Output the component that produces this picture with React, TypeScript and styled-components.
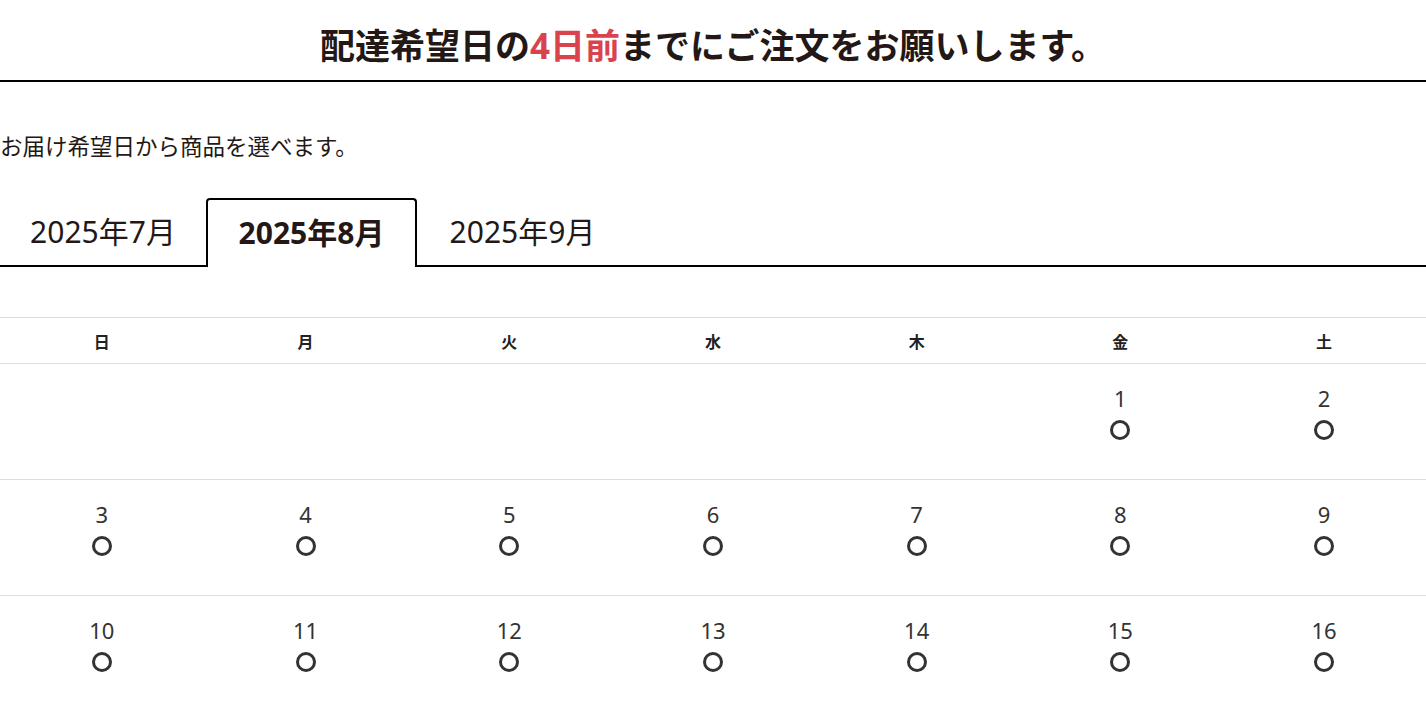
import styled, { createGlobalStyle } from "styled-components";
import { useState } from "react";

const GlobalStyle = createGlobalStyle`
	body {
		margin: 0;
		background: #fff;
		color: #222;
		font-family: "Noto Sans", "Noto Sans CJK JP", sans-serif;
	}
`;

const months = ["2025年7月", "2025年8月", "2025年9月"];
const weekdays = ["日", "月", "火", "水", "木", "金", "土"];

// August 2025 starts on a Friday
const buildWeeks = () => {
	const cells: (number | null)[] = [null, null, null, null, null];
	for (let d = 1; d <= 31; d++) cells.push(d);
	const weeks: (number | null)[][] = [];
	for (let i = 0; i < cells.length; i += 7) weeks.push(cells.slice(i, i + 7));
	return weeks;
};

const App = () => {
	const [active, setActive] = useState<number>(1);
	const weeks = buildWeeks();

	return (
		<Page>
			<GlobalStyle />
			<Heading>
				配達希望日の<Accent>4日前</Accent>までにご注文をお願いします。
			</Heading>
			<Lead>お届け希望日から商品を選べます。</Lead>
			<Tabs>
				{months.map((m, i) => (
					<Tab key={m} $active={i === active} onClick={() => setActive(i)}>
						{m}
					</Tab>
				))}
			</Tabs>
			<Calendar>
				<thead>
					<tr>
						{weekdays.map((w) => (
							<HeadCell key={w}>{w}</HeadCell>
						))}
					</tr>
				</thead>
				<tbody>
					{weeks.map((week, wi) => (
						<tr key={wi}>
							{week.map((day, di) => (
								<DayCell key={di}>
									{day && (
										<>
											<DayNumber>{day}</DayNumber>
											<Mark />
										</>
									)}
								</DayCell>
							))}
						</tr>
					))}
				</tbody>
			</Calendar>
		</Page>
	);
};

export default App;

const Page = styled.div`
	width: 100%;
	height: 707px;
	overflow: hidden;
`;

const Heading = styled.h1`
	margin: 0;
	padding: 22px 0 11px;
	font-size: 35px;
	font-weight: 700;
	line-height: 1.35;
	text-align: center;
	color: #231815;
	border-bottom: 2px solid #000;
`;

const Accent = styled.span`
	color: #d9434d;
`;

const Lead = styled.p`
	margin: 50px 0 0;
	font-size: 22.5px;
	line-height: 30px;
	color: #231815;
`;

const Tabs = styled.div`
	display: flex;
	margin-top: 36px;
	border-bottom: 2px solid #000;
	height: 69px;
	box-sizing: border-box;
`;

const Tab = styled.div<{ $active: boolean }>`
	width: 211px;
	box-sizing: border-box;
	display: flex;
	align-items: center;
	justify-content: center;
	padding-bottom: 6px;
	font-size: 30px;
	color: #231815;
	cursor: pointer;
	font-weight: ${(p) => (p.$active ? 700 : 400)};
	border: 2px solid ${(p) => (p.$active ? "#000" : "transparent")};
	border-bottom: none;
	border-radius: 4px 4px 0 0;
	margin-bottom: ${(p) => (p.$active ? "-2px" : "0")};
	background: ${(p) => (p.$active ? "#fff" : "transparent")};
	&:first-child {
		width: 206px;
	}
`;

const Calendar = styled.table`
	width: 100%;
	margin-top: 50px;
	border-collapse: collapse;
	table-layout: fixed;
`;

const HeadCell = styled.th`
	height: 45px;
	font-size: 16px;
	font-weight: 700;
	color: #222;
	border-top: 1px solid #ddd;
	border-bottom: 1px solid #ddd;
	padding: 0;
`;

const DayCell = styled.td`
	height: 115px;
	padding: 0;
	text-align: center;
	vertical-align: top;
	border-bottom: 1px solid #ddd;
`;

const DayNumber = styled.div`
	margin-top: 19px;
	font-size: 22px;
	line-height: 30px;
	color: #333;
`;

const Mark = styled.div`
	width: 14px;
	height: 14px;
	margin: 7px auto 0;
	border: 3px solid #333;
	border-radius: 50%;
`;
